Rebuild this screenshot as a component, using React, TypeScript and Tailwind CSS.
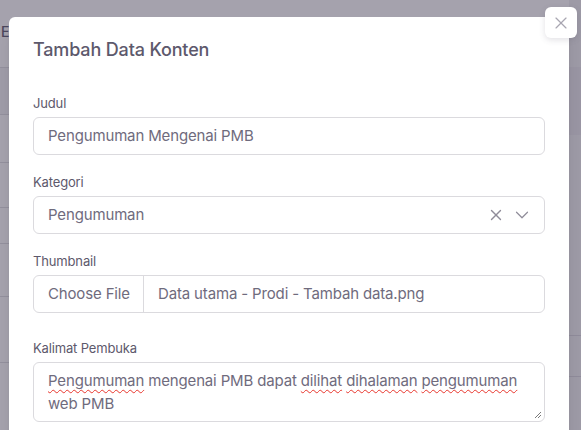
import { ChevronDown, X } from "lucide-react";

const font = { fontFamily: "Inter, 'Noto Sans', sans-serif" };

function Field({ label, className = "", children }: { label: string; className?: string; children: React.ReactNode }) {
  return (
    <div className={className}>
      <label className="mb-1 block text-[13px] leading-[19px] text-[#5d596c]">{label}</label>
      {children}
    </div>
  );
}

function Squiggle({ children }: { children: React.ReactNode }) {
  return (
    <span className="underline decoration-[#e8362d] decoration-wavy decoration-[1px] underline-offset-[3px]">
      {children}
    </span>
  );
}

// page that sits behind the dialog backdrop
function BackgroundPage() {
  return (
    <div className="flex h-full w-full">
      <div className="flex h-full w-[569px] flex-col bg-white">
        <div className="flex h-[68px] items-center border-b border-[#dbdade] pb-[4px] pl-[1px]">
          <span className="text-[14px] font-medium text-[#4b465c]">E</span>
        </div>
        <div className="h-[47px] border-b border-[#dbdade] bg-[#f3f2f5]" />
        <div className="h-[48px] border-b border-[#dbdade]" />
        <div className="h-[45px] border-b border-[#dbdade]" />
        <div className="h-[36px] border-b border-[#dbdade]" />
        <div className="h-[53px] border-b border-[#dbdade]" />
        <div className="h-[66px] border-b border-[#dbdade]" />
        <div className="flex-1" />
      </div>
      <div className="flex h-full flex-1 flex-col bg-[#efeef1]">
        <div className="mt-[67px] h-[68px] bg-[#e6e4ea]" />
        <div className="mt-[200px] border-b border-[#d3d1d8]" />
        <div className="mt-[40px] border-b border-[#d3d1d8]" />
      </div>
    </div>
  );
}

export default function App() {
  return (
    <div className="relative h-[430px] w-[581px] overflow-hidden" style={font}>
      <BackgroundPage />
      <div className="absolute inset-0 bg-[#4b465c]/50" />

      <div className="absolute inset-0 pl-[9px] pt-[17px]">
        <div className="relative h-[440px] w-[560px] rounded-md bg-white tracking-[-0.15px] shadow-lg">
          <button className="absolute -right-[8px] -top-[10px] flex h-[31px] w-[32px] items-center justify-center rounded-md bg-white text-[#a8a6b1] shadow-[0_2px_6px_rgba(75,70,92,0.16)]">
            <X size={20} strokeWidth={1.4} />
          </button>

          <div className="px-6 pt-[21px]">
            <h5 className="text-[18px] leading-6 font-medium text-[#5d596c]">Tambah Data Konten</h5>
          </div>

          <div className="flex flex-col gap-[18px] px-6 pt-8">
            <Field label="Judul">
              <div className="flex h-[38px] items-center rounded-md border border-[#dbdade] px-[14px] text-[15px] text-[#6f6b7d]">
                Pengumuman Mengenai PMB
              </div>
            </Field>

            <Field label="Kategori">
              <div className="flex h-[38px] items-center rounded-md border border-[#dbdade] pl-[14px] pr-[11px] text-[15px] text-[#6f6b7d]">
                <span className="flex-1">Pengumuman</span>
                <X size={18} strokeWidth={1.8} className="mr-[6px] text-[#8f8c99]" />
                <ChevronDown size={22} strokeWidth={1.3} className="text-[#8f8c99]" />
              </div>
            </Field>

            <Field label="Thumbnail">
              <div className="flex h-[38px] items-stretch overflow-hidden rounded-md border border-[#dbdade] text-[15px] text-[#6f6b7d]">
                <span className="flex w-[110px] shrink-0 items-center whitespace-nowrap border-r border-[#dbdade] px-[14px]">
                  Choose File
                </span>
                <span className="flex items-center whitespace-nowrap px-[14px]">Data utama - Prodi - Tambah data.png</span>
              </div>
            </Field>

            <Field label="Kalimat Pembuka" className="mt-2">
              <div className="relative h-[60px] rounded-md border border-[#dbdade] px-[14px] py-[6px] text-[15px] leading-[23px] text-[#6f6b7d]">
                <Squiggle>Pengumuman</Squiggle> mengenai PMB dapat <Squiggle>dilihat</Squiggle>{" "}
                <Squiggle>dihalaman</Squiggle> <Squiggle>pengumuman</Squiggle> web PMB
                <svg className="absolute bottom-[2px] right-[2px]" width="8" height="8" viewBox="0 0 8 8">
                  <path d="M7 1 L1 7 M7 4 L4 7" stroke="#7a7a7a" strokeWidth="1" />
                </svg>
              </div>
            </Field>
          </div>
        </div>
      </div>
    </div>
  );
}
